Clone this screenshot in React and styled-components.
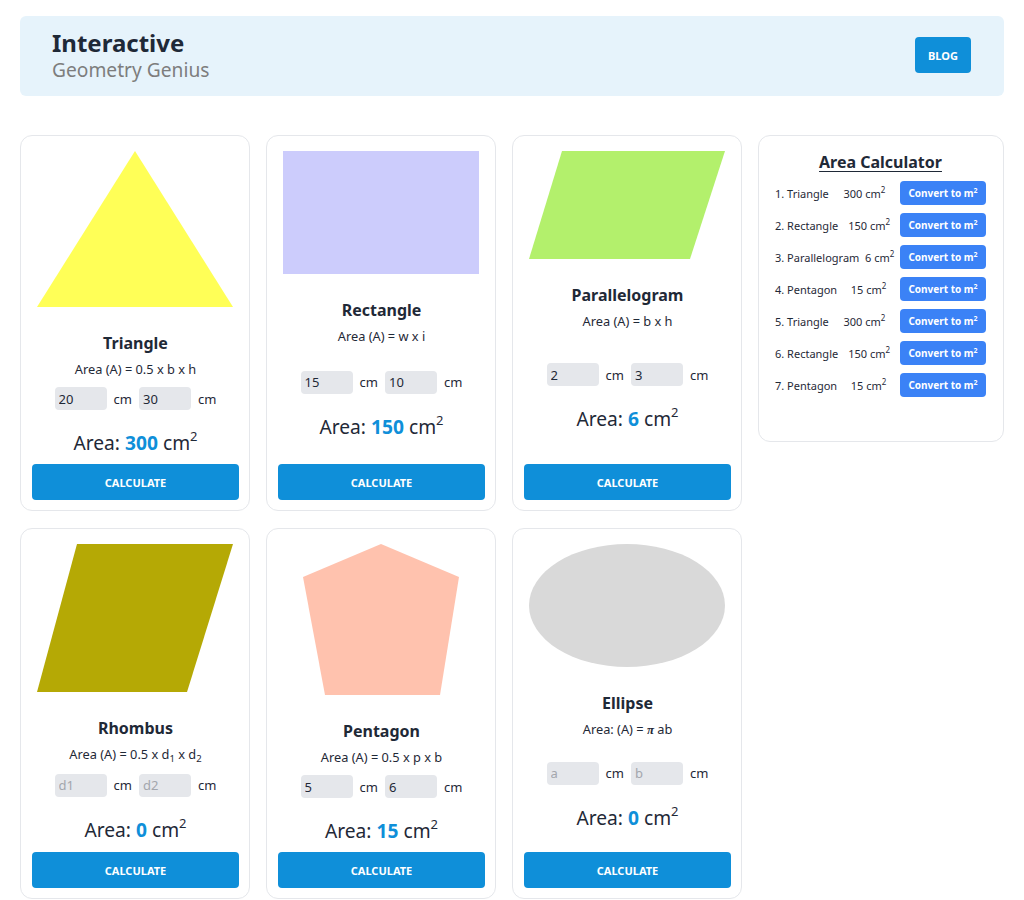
import React, { useState } from 'react';
import styled, { createGlobalStyle } from 'styled-components';

const GlobalStyle = createGlobalStyle`
  body {
    margin: 0;
    font-family: "Noto Sans", "Open Sans", sans-serif;
    color: #1f2937;
    background: #fff;
  }
  * { box-sizing: border-box; }
`;

const Page = styled.div`
  padding: 16px 20px 0;
`;

const Header = styled.header`
  display: flex;
  align-items: center;
  justify-content: space-between;
  background: #e6f3fb;
  border-radius: 6px;
  padding: 12px 33px 14px 32px;
`;

const Brand = styled.div`
  display: flex;
  flex-direction: column;
`;

const BrandTitle = styled.h1`
  margin: 0;
  font-size: 24px;
  line-height: 30px;
  font-weight: 700;
  color: #1f2937;
`;

const BrandSub = styled.span`
  font-size: 19.2px;
  line-height: 24px;
  color: #7d7d7d;
`;

const BlogButton = styled.button`
  width: 56px;
  height: 36px;
  border: none;
  border-radius: 4px;
  background: #0f8fd9;
  color: #fff;
  font-family: inherit;
  font-size: 11px;
  font-weight: 700;
`;

const Main = styled.main`
  display: flex;
  gap: 16px;
  align-items: flex-start;
  margin-top: 39px;
`;

const CardGrid = styled.div`
  display: grid;
  grid-template-columns: repeat(3, 230px);
  gap: 17px 16px;
`;

const Card = styled.section`
  display: flex;
  flex-direction: column;
  justify-content: space-between;
  border: 1px solid #e5e7eb;
  border-radius: 12px;
  padding: 15px 10px 10px 11px;
  text-align: center;
`;

const ShapeBox = styled.div`
  display: flex;
  justify-content: center;
  margin-right: 1px;
  svg { display: block; }
`;

const CardTitle = styled.h2`
  margin: 24px 0 0;
  font-size: 16px;
  line-height: 24px;
  font-weight: 700;
`;

const Formula = styled.p`
  margin: 5px 0 0;
  font-size: 12.8px;
  line-height: 19px;
  sub { font-size: 9.5px; line-height: 0; vertical-align: -3px; }
`;

const Middle = styled.div`
  margin-top: 8px;
`;

const InputRow = styled.div`
  display: flex;
  justify-content: center;
  align-items: center;
`;

const Field = styled.input`
  width: 52px;
  height: 23px;
  border: none;
  border-radius: 4px;
  background: #e5e7eb;
  padding: 0 4px;
  font-family: inherit;
  font-size: 13px;
  color: #1f2937;
  outline: none;
  & + span + & { margin-left: 7px; }
  &::placeholder { color: #a3a6ad; }
`;

const Unit = styled.span`
  font-size: 13px;
  margin-left: 7px;
`;

const AreaText = styled.p`
  margin: 18px 0 0;
  font-size: 19.2px;
  line-height: 30px;
  b { color: #0f8fd9; font-weight: 700; }
  sup { font-size: 13px; line-height: 0; vertical-align: 9px; }
`;

const CalcButton = styled.button`
  margin-top: 6px;
  width: 100%;
  height: 36px;
  border: none;
  border-radius: 4px;
  background: #0f8fd9;
  color: #fff;
  font-family: inherit;
  font-size: 11px;
  font-weight: 700;
`;

const Panel = styled.aside`
  width: 246px;
  border: 1px solid #e5e7eb;
  border-radius: 12px;
  padding: 14px 17px 44px 16px;
`;

const PanelTitle = styled.h3`
  margin: 0 0 7px;
  text-align: center;
  font-size: 16px;
  line-height: 24px;
  font-weight: 700;
  text-decoration: underline;
  text-underline-offset: 3px;
`;

const ResultRow = styled.div`
  display: flex;
  justify-content: space-between;
  align-items: center;
  font-size: 11px;
  & + & { margin-top: 8px; }
  sup { font-size: 8px; line-height: 0; vertical-align: 5px; }
`;

const ConvertButton = styled.button`
  width: 86px;
  height: 24px;
  border: none;
  border-radius: 4px;
  background: #3b82f6;
  color: #fff;
  font-family: inherit;
  font-size: 10px;
  font-weight: 700;
  padding: 0;
  sup { font-size: 7px; line-height: 0; vertical-align: 4px; }
`;

const Pi = styled.i`
  font-family: "Liberation Serif", serif;
  font-weight: 700;
`;

const shapes = [
  {
    name: 'Triangle',
    formula: <>Area (A) = 0.5 x b x h</>,
    svg: (
      <svg width="196" height="156" viewBox="0 0 196 156">
        <polygon points="98,0 196,156 0,156" fill="#ffff57" />
      </svg>
    ),
    a: '20', b: '30', pa: '', pb: '', area: 300,
  },
  {
    name: 'Rectangle',
    formula: <>Area (A) = w x i</>,
    svg: (
      <svg width="196" height="123" viewBox="0 0 196 123">
        <rect width="196" height="123" fill="#ccccfc" />
      </svg>
    ),
    a: '15', b: '10', pa: '', pb: '', area: 150,
  },
  {
    name: 'Parallelogram',
    formula: <>Area (A) = b x h</>,
    svg: (
      <svg width="196" height="108" viewBox="0 0 196 108">
        <polygon points="33,0 196,0 161,108 0,108" fill="#b3f06c" />
      </svg>
    ),
    a: '2', b: '3', pa: '', pb: '', area: 6,
  },
  {
    name: 'Rhombus',
    formula: <>Area (A) = 0.5 x d<sub>1</sub> x d<sub>2</sub></>,
    svg: (
      <svg width="196" height="148" viewBox="0 0 196 148">
        <polygon points="40,0 196,0 150,148 0,148" fill="#b5a905" />
      </svg>
    ),
    a: '', b: '', pa: 'd1', pb: 'd2', area: 0,
  },
  {
    name: 'Pentagon',
    formula: <>Area (A) = 0.5 x p x b</>,
    svg: (
      <svg width="156" height="151" viewBox="0 0 156 151">
        <polygon points="78,0 156,33 137,151 22,151 0,33" fill="#ffc2ae" />
      </svg>
    ),
    a: '5', b: '6', pa: '', pb: '', area: 15,
  },
  {
    name: 'Ellipse',
    formula: <>Area: (A) = <Pi>π</Pi> ab</>,
    svg: (
      <svg width="196" height="123" viewBox="0 0 196 123">
        <ellipse cx="98" cy="61.5" rx="98" ry="61.5" fill="#d9d9d9" />
      </svg>
    ),
    a: '', b: '', pa: 'a', pb: 'b', area: 0,
  },
];

const results = [
  ['1. Triangle', '300'],
  ['2. Rectangle', '150'],
  ['3. Parallelogram', '6'],
  ['4. Pentagon', '15'],
  ['5. Triangle', '300'],
  ['6. Rectangle', '150'],
  ['7. Pentagon', '15'],
];

const ShapeCard = ({ shape }) => {
  const [a, setA] = useState(shape.a);
  const [b, setB] = useState(shape.b);
  return (
    <Card>
      <div>
        <ShapeBox>{shape.svg}</ShapeBox>
        <CardTitle>{shape.name}</CardTitle>
        <Formula>{shape.formula}</Formula>
      </div>
      <Middle>
        <InputRow>
          <Field value={a} placeholder={shape.pa} onChange={(e) => setA(e.target.value)} />
          <Unit>cm</Unit>
          <Field value={b} placeholder={shape.pb} onChange={(e) => setB(e.target.value)} />
          <Unit>cm</Unit>
        </InputRow>
        <AreaText>
          Area: <b>{shape.area}</b> cm<sup>2</sup>
        </AreaText>
      </Middle>
      <CalcButton>CALCULATE</CalcButton>
    </Card>
  );
};

const App = () => (
  <Page>
    <GlobalStyle />
    <Header>
      <Brand>
        <BrandTitle>Interactive</BrandTitle>
        <BrandSub>Geometry Genius</BrandSub>
      </Brand>
      <BlogButton>BLOG</BlogButton>
    </Header>
    <Main>
      <CardGrid>
        {shapes.map((s) => (
          <ShapeCard key={s.name} shape={s} />
        ))}
      </CardGrid>
      <Panel>
        <PanelTitle>Area Calculator</PanelTitle>
        {results.map(([label, value], i) => (
          <ResultRow key={i}>
            <span>{label}</span>
            <span>
              {value} cm<sup>2</sup>
            </span>
            <ConvertButton>
              Convert to m<sup>2</sup>
            </ConvertButton>
          </ResultRow>
        ))}
      </Panel>
    </Main>
  </Page>
);

export default App;
